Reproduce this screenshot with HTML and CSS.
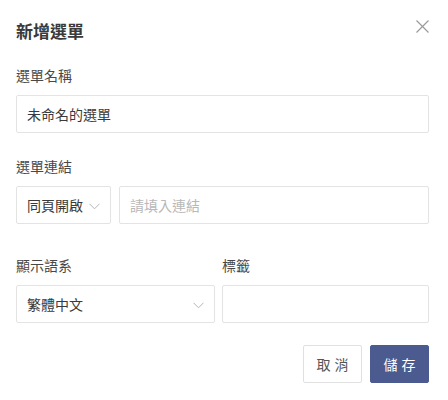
FILE: index.html
```html
<!DOCTYPE html>
<html lang="zh-Hant">

<head>
    <meta charset="UTF-8">
    <meta name="viewport" content="width=device-width, initial-scale=1.0">
    <title>新增選單</title>

    <link rel="stylesheet" href="styles.css">
</head>

<body>

    <div class="modal">
        <div class="modal-header">
            <h1>新增選單</h1>
            <button class="close-button" aria-label="close">
                <svg width="13" height="13" viewBox="0 0 13 13">
                    <path d="M0.5 0.5 L12.5 12.5 M12.5 0.5 L0.5 12.5" stroke="#9a9a9a" stroke-width="1.2" fill="none" />
                </svg>
            </button>
        </div>

        <div class="field">
            <label class="field-label">選單名稱</label>
            <div class="input">未命名的選單</div>
        </div>

        <div class="field field-link">
            <label class="field-label">選單連結</label>
            <div class="row">
                <div class="select select-small">
                    <span>同頁開啟</span>
                    <svg class="chevron" width="11" height="7" viewBox="0 0 11 7">
                        <path d="M0.5 0.8 L5.5 5.8 L10.5 0.8" stroke="#b5b5b5" stroke-width="1" fill="none" />
                    </svg>
                </div>
                <div class="input input-grow placeholder">請填入連結</div>
            </div>
        </div>

        <div class="field field-last">
            <div class="two-cols">
                <div>
                    <label class="field-label">顯示語系</label>
                    <div class="select">
                        <span>繁體中文</span>
                        <svg class="chevron" width="11" height="7" viewBox="0 0 11 7">
                            <path d="M0.5 0.8 L5.5 5.8 L10.5 0.8" stroke="#b5b5b5" stroke-width="1" fill="none" />
                        </svg>
                    </div>
                </div>
                <div>
                    <label class="field-label">標籤</label>
                    <div class="input"></div>
                </div>
            </div>
        </div>

        <div class="actions">
            <button class="btn btn-cancel">取消</button>
            <button class="btn btn-save">儲存</button>
        </div>
    </div>

</body>

</html>
```

FILE: styles.css
```css
body {
    font-family: "Noto Sans CJK TC", "Noto Sans", sans-serif;
    background-color: #fff;
    margin: 0;
    padding: 0;
    color: #333;
}

.modal {
    width: 413px;
    padding: 19px 19px 0 16px;
}

.modal-header {
    display: flex;
    justify-content: space-between;
    align-items: flex-start;
    margin-bottom: 22px;
}

h1 {
    margin: 0;
    font-size: 17px;
    line-height: 24px;
    font-weight: bold;
    color: #3a3a3a;
}

.close-button {
    border: none;
    background: none;
    padding: 0;
    margin: 1px 0 0 0;
    width: 13px;
    height: 13px;
    cursor: pointer;
    display: block;
}

.close-button svg {
    display: block;
}

.field {
    margin-bottom: 23px;
}

.field-link {
    margin-bottom: 31px;
}

.field-last {
    margin-bottom: 22px;
}

.field-label {
    display: block;
    font-size: 14px;
    line-height: 20px;
    color: #484848;
    margin-bottom: 10px;
}

.input,
.select {
    box-sizing: border-box;
    height: 38px;
    border: 1px solid #e3e3e3;
    border-radius: 2px;
    padding: 0 10px;
    font-size: 14px;
    line-height: 36px;
    color: #3a3a3a;
    background-color: #fff;
}

.placeholder {
    color: #b8b8b8;
}

.row {
    display: flex;
    gap: 8px;
}

.input-grow {
    flex: 1;
}

.select {
    display: flex;
    align-items: center;
    justify-content: space-between;
}

.select-small {
    width: 95px;
    padding-right: 10px;
}

.chevron {
    display: block;
    margin-top: 2px;
}

.two-cols {
    display: grid;
    grid-template-columns: 199px 1fr;
    gap: 7px;
}

.actions {
    display: flex;
    justify-content: flex-end;
    gap: 8px;
}

.btn {
    font-family: inherit;
    font-size: 14px;
    height: 38px;
    width: 59px;
    border-radius: 2px;
    letter-spacing: 4px;
    padding: 0 0 0 4px;
    cursor: pointer;
}

.btn-cancel {
    background-color: #fff;
    border: 1px solid #e0e0e0;
    color: #555;
}

.btn-save {
    background-color: #4b5a8f;
    border: 1px solid #4b5a8f;
    color: #fff;
}
```
